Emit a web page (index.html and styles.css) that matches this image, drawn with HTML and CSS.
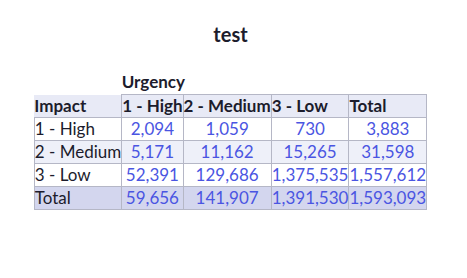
FILE: index.html
```html
<!DOCTYPE html>
<html>
<head>
<meta charset="utf-8">
<link rel="stylesheet" href="styles.css">
</head>
<body>
<div class="wrap">
  <h1 class="title">test</h1>
  <table class="pivot">
    <tr class="top">
      <th class="blank"></th>
      <th class="urg" colspan="4">Urgency</th>
    </tr>
    <tr class="head">
      <th class="rowhead">Impact</th>
      <th>1 - High</th>
      <th>2 - Medium</th>
      <th>3 - Low</th>
      <th>Total</th>
    </tr>
    <tr class="odd">
      <td class="lab">1 - High</td><td>2,094</td><td>1,059</td><td>730</td><td>3,883</td>
    </tr>
    <tr class="even">
      <td class="lab">2 - Medium</td><td>5,171</td><td>11,162</td><td>15,265</td><td>31,598</td>
    </tr>
    <tr class="odd">
      <td class="lab">3 - Low</td><td>52,391</td><td>129,686</td><td>1,375,535</td><td>1,557,612</td>
    </tr>
    <tr class="total">
      <td class="lab">Total</td><td>59,656</td><td>141,907</td><td>1,391,530</td><td>1,593,093</td>
    </tr>
  </table>
</div>
</body>
</html>
```
FILE: styles.css
```css
html, body { margin: 0; padding: 0; background: #fff; }
body { font-family: Lato, "Noto Sans", sans-serif; color: #1c1c2c; }
.wrap { width: 461px; display: flex; flex-direction: column; align-items: center; padding-top: 22px; }
.title { font-size: 20px; font-weight: 700; margin: 0 0 25px 0; line-height: 24px; }
.pivot { border-collapse: collapse; font-size: 17px; line-height: 22px; }
.pivot th, .pivot td { padding: 0; white-space: nowrap; }
.pivot th { text-align: left; font-weight: 700; }
.top th { padding-bottom: 1px; }
.head th { background: #e8eaf6; border: 1px solid #b5b7c6; }
.head th.rowhead { border-left: none; border-top: none; }
.pivot td { border: 1px solid #b5b7c6; text-align: center; color: #4a55e2; }
.pivot td.lab { text-align: left; color: #1c1c2c; }
.odd td { background: #fff; }
.even td { background: #eef0f9; }
.total td { background: #d3d6ee; }
```
